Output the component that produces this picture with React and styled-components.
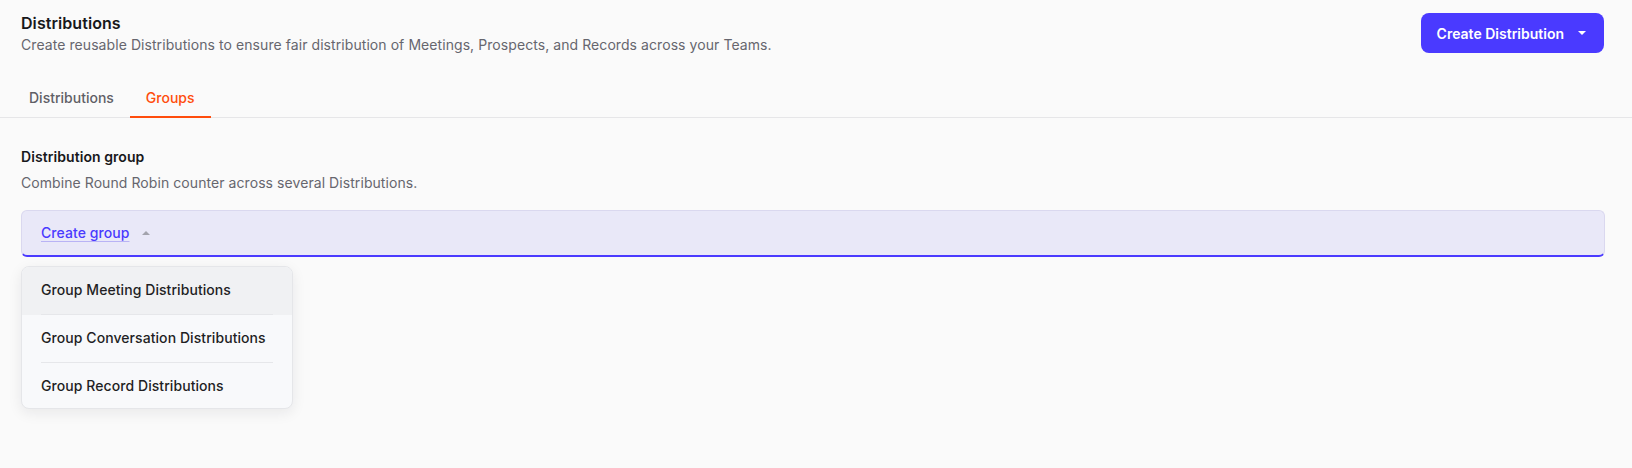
import React, { useState } from 'react';
import styled, { createGlobalStyle } from 'styled-components';

const GlobalStyle = createGlobalStyle`
  * { box-sizing: border-box; }
  body {
    margin: 0;
    background: #fafafa;
    font-family: Inter, "Noto Sans", sans-serif;
    color: #1b1b1f;
    letter-spacing: 0.07px;
  }
`;

const Page = styled.div`
  min-height: 468px;
  background: #fafafa;
`;

const Header = styled.header`
  display: flex;
  align-items: center;
  justify-content: space-between;
  padding: 11px 28px 0 21px;
`;

const TitleBlock = styled.div`
  display: flex;
  flex-direction: column;
`;

const Title = styled.h1`
  margin: 0;
  font-size: 16px;
  line-height: 24px;
  font-weight: 600;
  color: #18181b;
`;

const Subtitle = styled.p`
  margin: 0;
  font-size: 14px;
  line-height: 20px;
  color: #66666e;
`;

const PrimaryButton = styled.button`
  display: flex;
  align-items: center;
  gap: 14px;
  height: 40px;
  padding: 0 18px 0 16px;
  border: none;
  border-radius: 8px;
  background: #4a3aff;
  color: #fff;
  font-family: inherit;
  font-size: 14px;
  font-weight: 600;
  letter-spacing: normal;
  cursor: pointer;
`;

const Caret = styled.span`
  width: 0;
  height: 0;
  border-left: 4px solid transparent;
  border-right: 4px solid transparent;
  border-top: 4px solid ${({ color }) => color || '#fff'};
  ${({ up }) => up && 'transform: rotate(180deg);'}
`;

const TabList = styled.nav`
  display: flex;
  margin-top: 23px;
  padding-left: 13px;
  border-bottom: 1px solid #e6e6e8;
`;

const Tab = styled.button`
  padding: 10px 16px 8px;
  margin-bottom: -1px;
  border: none;
  border-bottom: 2px solid ${({ active }) => (active ? '#ff4d0d' : 'transparent')};
  background: none;
  font-family: inherit;
  font-size: 14px;
  line-height: 20px;
  font-weight: 500;
  letter-spacing: normal;
  color: ${({ active }) => (active ? '#ff4d0d' : '#5f5f66')};
  cursor: pointer;
`;

const Content = styled.section`
  padding: 29px 27px 0 21px;
`;

const SectionTitle = styled.h2`
  margin: 0;
  font-size: 14px;
  line-height: 20px;
  font-weight: 600;
  color: #18181b;
`;

const SectionText = styled.p`
  margin: 6px 0 0;
  font-size: 14px;
  line-height: 20px;
  color: #66666e;
`;

const GroupBox = styled.div`
  margin-top: 17px;
  display: flex;
  align-items: center;
  padding: 12px 19px 12px;
  background: #e9e8f8;
  border: 1px solid #dad8ef;
  border-bottom: 2px solid #4a3aff;
  border-radius: 6px;
`;

const GroupTrigger = styled.button`
  display: flex;
  align-items: center;
  gap: 12px;
  padding: 0;
  border: none;
  background: none;
  font-family: inherit;
  font-size: 14px;
  line-height: 20px;
  font-weight: 500;
  letter-spacing: inherit;
  color: #4a3aff;
  cursor: pointer;
`;

const TriggerLabel = styled.span`
  text-decoration: underline;
  text-decoration-color: #b9b3f5;
  text-underline-offset: 3px;
`;

const Menu = styled.ul`
  list-style: none;
  margin: 9px 0 0;
  padding: 0;
  width: 272px;
  background: #f8f9fb;
  border: 1px solid #e5e6e9;
  border-radius: 8px;
  box-shadow: 0 4px 14px rgba(20, 20, 40, 0.08);
  overflow: hidden;
`;

const MenuItem = styled.li`
  padding: 0 19px;
  background: ${({ highlighted }) => (highlighted ? '#f0f1f3' : 'transparent')};
  cursor: pointer;
`;

const MenuItemInner = styled.div`
  padding: 13px 0 ${({ last }) => (last ? '12px' : '14px')};
  font-size: 14px;
  line-height: 20px;
  font-weight: 500;
  color: #1f1f24;
  border-bottom: ${({ last }) => (last ? 'none' : '1px solid #e6e7ea')};
`;

const groupOptions = [
  'Group Meeting Distributions',
  'Group Conversation Distributions',
  'Group Record Distributions',
];

export default function App() {
  const [tab, setTab] = useState('groups');
  const [hovered, setHovered] = useState(0);

  return (
    <Page>
      <GlobalStyle />
      <Header>
        <TitleBlock>
          <Title>Distributions</Title>
          <Subtitle>
            Create reusable Distributions to ensure fair distribution of Meetings, Prospects, and Records across your Teams.
          </Subtitle>
        </TitleBlock>
        <PrimaryButton>
          Create Distribution
          <Caret />
        </PrimaryButton>
      </Header>

      <TabList>
        <Tab active={tab === 'distributions'} onClick={() => setTab('distributions')}>
          Distributions
        </Tab>
        <Tab active={tab === 'groups'} onClick={() => setTab('groups')}>
          Groups
        </Tab>
      </TabList>

      <Content>
        <SectionTitle>Distribution group</SectionTitle>
        <SectionText>Combine Round Robin counter across several Distributions.</SectionText>
        <GroupBox>
          <GroupTrigger>
            <TriggerLabel>Create group</TriggerLabel>
            <Caret up color="#a3a3ad" />
          </GroupTrigger>
        </GroupBox>
        <Menu>
          {groupOptions.map((label, i) => (
            <MenuItem key={label} highlighted={hovered === i} onMouseEnter={() => setHovered(i)}>
              <MenuItemInner last={i === groupOptions.length - 1}>{label}</MenuItemInner>
            </MenuItem>
          ))}
        </Menu>
      </Content>
    </Page>
  );
}
